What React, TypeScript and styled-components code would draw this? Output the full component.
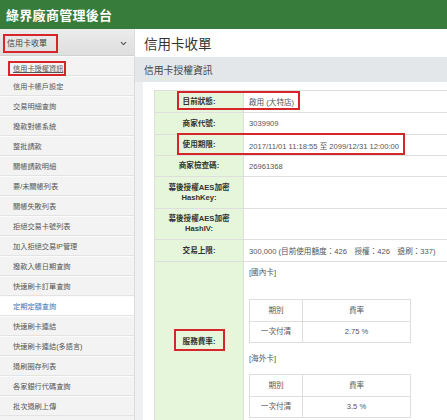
import React from "react";
import styled, { createGlobalStyle } from "styled-components";
import { ChevronDown } from "lucide-react";

const FONT = `"Liberation Sans", "Noto Sans CJK TC", Arial, sans-serif`;
const RED = "#d7262b";

const Global = createGlobalStyle`
  html, body { margin: 0; padding: 0; overflow: hidden; background: #fff; }
  body { font-family: ${FONT}; color: #444; }
  * { box-sizing: border-box; }
`;

const Page = styled.div`
  width: 447px;
  height: 420px;
  display: flex;
  flex-direction: column;
  overflow: hidden;
`;

const TopBar = styled.header`
  height: 29px;
  flex: none;
  background: #387c3c;
  color: #fff;
  font-weight: bold;
  font-size: 13px;
  display: flex;
  align-items: center;
  padding-left: 6px;
  letter-spacing: 0.3px;
`;

const Body = styled.div`
  flex: 1;
  display: flex;
  min-height: 0;
`;

const Sidebar = styled.nav`
  width: 135px;
  flex: none;
  background: #f3f3f3;
  border-right: 1px solid #dcdcdc;
  display: flex;
  flex-direction: column;
`;

const SideHead = styled.div`
  height: 27px;
  flex: none;
  display: flex;
  align-items: center;
  justify-content: space-between;
  padding: 3px 6px 0 3px;
  background: linear-gradient(#ececec, #dedede);
  border-bottom: 1px solid #d2d2d2;
  color: #444;
  font-size: 8px;
`;

const HeadMark = styled.span`
  display: inline-block;
  border: 2px solid ${RED};
  line-height: 15px;
  padding: 0 9px 0 2px;
`;

const SideItem = styled.div<{ $current?: boolean; $marked?: boolean }>`
  height: 20px;
  flex: none;
  display: flex;
  align-items: center;
  padding-left: ${(p) => (p.$marked ? "8px" : "13px")};
  font-size: 7.2px;
  color: ${(p) => (p.$current ? "#3a78b8" : "#555")};
  background: ${(p) => (p.$current ? "#fff" : "#f3f3f3")};
  border-bottom: 1px solid #e3e3e3;
  border-top: 1px solid #fbfbfb;
`;

const ItemMark = styled.span`
  display: inline-block;
  border: 2px solid ${RED};
  line-height: 11px;
  padding: 0 1px 0 3px;
  text-decoration: underline;
  color: #555;
  margin-top: 4px;
`;

const Main = styled.main`
  flex: 1;
  display: flex;
  flex-direction: column;
  min-width: 0;
  background: #eef0f2;
`;

const PageTitle = styled.div`
  height: 28px;
  flex: none;
  background: #fff;
  display: flex;
  align-items: center;
  padding-left: 9px;
  font-size: 13.5px;
  color: #333;
`;

const SectionBar = styled.div`
  height: 25px;
  flex: none;
  background: #e4e7ea;
  display: flex;
  align-items: center;
  padding-left: 9px;
  font-size: 9.8px;
  color: #444;
`;

const Panel = styled.div`
  flex: 1;
  margin-left: 8px;
  background: #fff;
  padding: 8px 0 0 11px;
  overflow: hidden;
`;

const TableWrap = styled.div`
  position: relative;
  width: calc(100% + 20px);
`;

const InfoTable = styled.table`
  width: 100%;
  border-collapse: collapse;
  font-size: 7.6px;
  color: #555;
`;

const Row = styled.tr<{ $h: number }>`
  height: ${(p) => p.$h}px;
`;

const Label = styled.th`
  width: 89px;
  background: #e5f6da;
  border: 1px solid #dedede;
  font-weight: bold;
  text-align: center;
  color: #333;
  line-height: 10px;
  padding: 0;
`;

const Value = styled.td`
  border: 1px solid #dedede;
  padding: 0 0 0 5px;
  vertical-align: middle;
`;

const RateCell = styled.td`
  border: 1px solid #dedede;
  padding: 5px 0 4px 5px;
  vertical-align: top;
  line-height: 11px;
`;

const CardType = styled.div<{ $gap: number }>`
  margin-bottom: ${(p) => p.$gap}px;
`;

const RateTable = styled.table`
  width: 162px;
  border-collapse: collapse;
  text-align: center;
  margin-bottom: 10px;
  &:last-child { margin-bottom: 0; }
  td { border: 1px solid #dedede; height: 21.5px; padding: 0; }
  td:first-child { width: 53px; }
`;

const Box = styled.div<{ $x: number; $y: number; $w: number; $h: number }>`
  position: absolute;
  left: ${(p) => p.$x}px;
  top: ${(p) => p.$y}px;
  width: ${(p) => p.$w}px;
  height: ${(p) => p.$h}px;
  border: 2.5px solid ${RED};
  pointer-events: none;
`;

const items = [
  "信用卡帳戶設定",
  "交易明細查詢",
  "撥款對帳系統",
  "整批請款",
  "關帳請款明細",
  "要/未關帳列表",
  "關帳失敗列表",
  "拒絕交易卡號列表",
  "加入拒絕交易IP管理",
  "撥款入帳日期查詢",
  "快速刷卡訂單查詢",
  "定期定額查詢",
  "快速刷卡連結",
  "快速刷卡連結(多語言)",
  "退刷圈存列表",
  "各家銀行代碼查詢",
  "批次退刷上傳",
];

function Rates({ rate }: { rate: string }) {
  return (
    <RateTable>
      <tbody>
        <tr>
          <td>期別</td>
          <td>費率</td>
        </tr>
        <tr>
          <td>一次付清</td>
          <td>{rate}</td>
        </tr>
      </tbody>
    </RateTable>
  );
}

export default function App() {
  return (
    <Page>
      <Global />
      <TopBar>綠界廠商管理後台</TopBar>
      <Body>
        <Sidebar>
          <SideHead>
            <HeadMark>信用卡收單</HeadMark>
            <ChevronDown size={9} strokeWidth={3} color="#555" />
          </SideHead>
          <SideItem $marked>
            <ItemMark>信用卡授權資訊</ItemMark>
          </SideItem>
          {items.map((t) => (
            <SideItem key={t} $current={t === "定期定額查詢"}>
              {t}
            </SideItem>
          ))}
        </Sidebar>
        <Main>
          <PageTitle>信用卡收單</PageTitle>
          <SectionBar>信用卡授權資訊</SectionBar>
          <Panel>
            <TableWrap>
              <InfoTable>
                <tbody>
                  <Row $h={22}>
                    <Label>目前狀態:</Label>
                    <Value>啟用 (大特店)</Value>
                  </Row>
                  <Row $h={22}>
                    <Label>商家代號:</Label>
                    <Value>3039909</Value>
                  </Row>
                  <Row $h={21}>
                    <Label>使用期限:</Label>
                    <Value>2017/11/01 11:18:55 至 2099/12/31 12:00:00</Value>
                  </Row>
                  <Row $h={21}>
                    <Label>商家檢查碼:</Label>
                    <Value>26961368</Value>
                  </Row>
                  <Row $h={32}>
                    <Label>
                      幕後授權AES加密
                      <br />
                      HashKey:
                    </Label>
                    <Value />
                  </Row>
                  <Row $h={31}>
                    <Label>
                      幕後授權AES加密
                      <br />
                      HashIV:
                    </Label>
                    <Value />
                  </Row>
                  <Row $h={22}>
                    <Label>交易上限:</Label>
                    <Value>300,000 (目前使用額度：426　授權：426　退刷：337)</Value>
                  </Row>
                  <Row $h={158}>
                    <Label>服務費率:</Label>
                    <RateCell>
                      <CardType $gap={21}>[國內卡]</CardType>
                      <Rates rate="2.75 %" />
                      <CardType $gap={10}>[海外卡]</CardType>
                      <Rates rate="3.5 %" />
                    </RateCell>
                  </Row>
                </tbody>
              </InfoTable>
              <Box $x={23} $y={1} $w={123} $h={19} />
              <Box $x={23} $y={43} $w={228} $h={22} />
              <Box $x={20} $y={239} $w={51} $h={22} />
            </TableWrap>
          </Panel>
        </Main>
      </Body>
    </Page>
  );
}
